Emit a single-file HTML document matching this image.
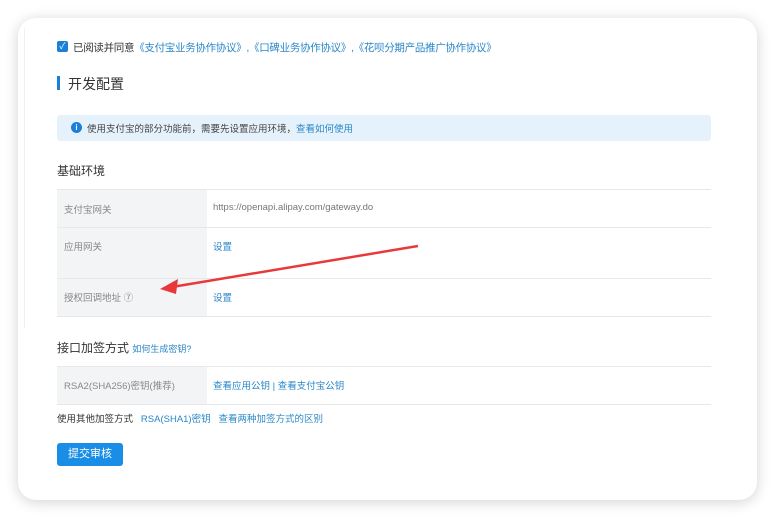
<!DOCTYPE html>
<html><head><meta charset="utf-8"><style>
*{margin:0;padding:0;box-sizing:border-box}
body{width:774px;height:518px;background:#fff;font-family:"Liberation Sans","Noto Sans CJK SC",sans-serif;position:relative;overflow:hidden;color:#333}
.card{position:absolute;left:18px;top:18px;width:739px;height:482px;background:#fff;border-radius:18px;box-shadow:0 2px 14px rgba(0,0,0,.18)}
.a{position:absolute;white-space:nowrap}
.blue{color:#2a87c8}
.row{position:absolute;left:57px;width:654px;border-top:1px solid #e8e8e8}
.lc{position:absolute;left:57px;width:150px;background:#f3f4f6}
</style></head><body>
<div class="card"></div>
<div class="a" style="left:24px;top:28px;width:1px;height:300px;background:#f0f0f0"></div>
<div class="a" style="left:57px;top:41px;width:11px;height:11px;background:#1a7fd6;border-radius:2px;color:#fff;font-size:9px;line-height:11px;text-align:center">✓</div>
<div class="a" style="left:73px;top:40px;font-size:10.5px;letter-spacing:-0.3px">已阅读并同意<span class="blue">《支付宝业务协作协议》,《口碑业务协作协议》,《花呗分期产品推广协作协议》</span></div>
<div class="a" style="left:57px;top:76px;width:3px;height:14px;background:#1a7fd6"></div>
<div class="a" style="left:68px;top:74px;font-size:14px;color:#333">开发配置</div>
<div class="a" style="left:57px;top:115px;width:654px;height:26px;background:#e6f2fb;border-radius:3px"></div>
<div class="a" style="left:71px;top:122px;width:11px;height:11px;border-radius:50%;background:#1a7fd6;color:#fff;font-size:8px;line-height:11px;text-align:center;font-weight:bold">i</div>
<div class="a" style="left:87px;top:121px;font-size:9.5px;color:#444">使用支付宝的部分功能前，需要先设置应用环境，<span class="blue">查看如何使用</span></div>
<div class="a" style="left:57px;top:162px;font-size:12px">基础环境</div>
<div class="lc" style="top:189px;height:127px"></div>
<div class="row" style="top:189px"></div><div class="row" style="top:227px"></div><div class="row" style="top:278px"></div><div class="row" style="top:316px"></div>
<div class="a" style="left:64px;top:202px;font-size:9.5px;color:#888">支付宝网关</div>
<div class="a" style="left:213px;top:202px;font-size:9.5px;color:#777">https://openapi.alipay.com/gateway.do</div>
<div class="a" style="left:64px;top:239px;font-size:9.5px;color:#888">应用网关</div>
<div class="a blue" style="left:213px;top:239px;font-size:9.5px">设置</div>
<div class="a" style="left:64px;top:290px;font-size:9.5px;color:#888">授权回调地址 ⑦</div>
<div class="a blue" style="left:213px;top:290px;font-size:9.5px">设置</div>
<svg class="a" style="left:0;top:0" width="774" height="518"><line x1="418" y1="246" x2="172" y2="287" stroke="#e8393a" stroke-width="2.5"/><polygon points="160,289 178,279 176,294" fill="#e8393a"/></svg>
<div class="a" style="left:57px;top:339px;font-size:12px">接口加签方式 <span class="blue" style="font-size:9px">如何生成密钥?</span></div>
<div class="lc" style="top:366px;height:38px"></div>
<div class="row" style="top:366px"></div><div class="row" style="top:404px"></div>
<div class="a" style="left:64px;top:378px;font-size:9.5px;color:#888">RSA2(SHA256)密钥(推荐)</div>
<div class="a blue" style="left:213px;top:378px;font-size:9.5px">查看应用公钥 | 查看支付宝公钥</div>
<div class="a" style="left:57px;top:411px;font-size:9.5px;color:#333">使用其他加签方式 &nbsp; <span class="blue">RSA(SHA1)密钥 &nbsp; 查看两种加签方式的区别</span></div>
<div class="a" style="left:57px;top:443px;width:66px;height:23px;background:#1a8ee6;border-radius:3px;color:#fff;font-size:11px;line-height:23px;text-align:center">提交审核</div>
</body></html>
